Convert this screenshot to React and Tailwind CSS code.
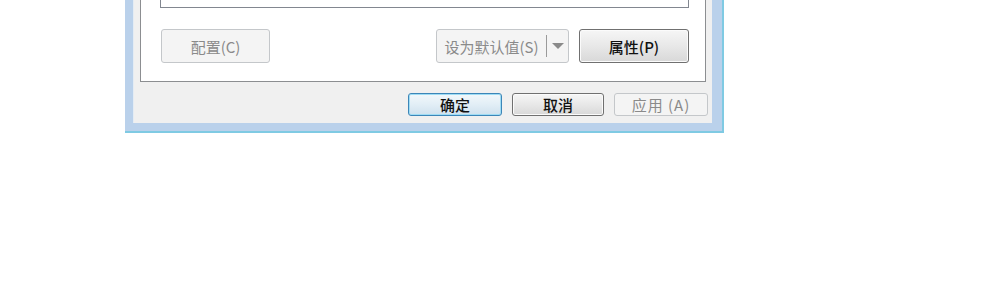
import React from 'react';

const font = { fontFamily: '"Noto Sans CJK SC", "Noto Sans", sans-serif' };

// Win7-style push button
function Btn({ children, className = '', disabled = false, isDefault = false }) {
    const base = 'flex items-center justify-center rounded-[3px] text-[15px] leading-none';
    if (disabled) {
        return (
            <div className={`${base} border border-[#c4c7ca] bg-[#f4f4f4] text-[#8a8a8a] ${className}`}>
                {children}
            </div>
        );
    }
    if (isDefault) {
        return (
            <div className={`${base} border border-[#3c86b8] bg-gradient-to-b from-[#f2f8fb] via-[#e2eef6] to-[#cfe1ee] text-[#111] font-medium shadow-[inset_0_0_0_1px_#9fdcf4] ${className}`}>
                {children}
            </div>
        );
    }
    return (
        <div className={`${base} border border-[#707070] bg-gradient-to-b from-[#f6f6f6] via-[#e8e8e8] to-[#d8d8d8] text-[#111] font-medium shadow-[inset_0_0_0_1px_#fbfbfb] ${className}`}>
            {children}
        </div>
    );
}

export default function App() {
    return (
        <div className="w-[1000px] h-[303px] bg-white pl-[125px]" style={font}>
            {/* dialog frame */}
            <div className="w-[599px] h-[133px] flex flex-col bg-[#bad1eb] border-r-2 border-b-2 border-[#7fcae3] pl-[8px] pr-[10px] pb-[8px]">
                <div className="flex-1 flex flex-col bg-[#f0f0f0] border-l border-[#e4ecf4]">
                    {/* tab page */}
                    <div className="mx-[6px] h-[82px] bg-white border-x border-b border-[#8c8e91] pl-[19px] pr-[16px] flex flex-col">
                        <div className="h-[8px] border-x border-b border-[#828790]" />
                        <div className="mt-[21px] flex items-start">
                            <Btn disabled className="ml-[1px] w-[109px] h-[34px]">配置(C)</Btn>
                            <div className="ml-auto flex items-center w-[133px] h-[34px] rounded-[3px] border border-[#c4c7ca] bg-[#f4f4f4] text-[15px] text-[#8a8a8a]">
                                <span className="w-[109px] text-center leading-none">设为默认值(S)</span>
                                <div className="w-px h-[22px] bg-[#9a9a9a]" />
                                <div className="flex-1 flex items-center justify-center">
                                    <svg width="12" height="6" viewBox="0 0 12 6">
                                        <path d="M0 0 H12 L6 6 Z" fill="#8a8a8a" />
                                    </svg>
                                </div>
                            </div>
                            <Btn className="ml-[10px] w-[110px] h-[34px]">属性(P)</Btn>
                        </div>
                    </div>
                    {/* OK / Cancel / Apply */}
                    <div className="mt-[11px] flex justify-end gap-[10px] pr-[4px]">
                        <Btn isDefault className="w-[94px] h-[23px]">确定</Btn>
                        <Btn className="w-[92px] h-[23px]">取消</Btn>
                        <Btn disabled className="w-[94px] h-[23px] tracking-[1px]">应用 (A)</Btn>
                    </div>
                </div>
            </div>
        </div>
    );
}
